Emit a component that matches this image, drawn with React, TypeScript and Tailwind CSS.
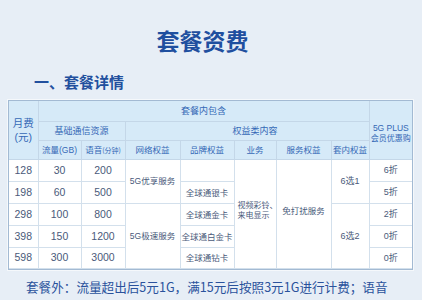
const cjk = { fontFamily: '"Noto Sans CJK SC", "Noto Sans", sans-serif' };
const tbl = { fontFamily: '"Liberation Sans", "Noto Sans CJK SC", sans-serif' };

const th = 'border border-[#c4d7e8] bg-[#d6eaf8] text-[#3468b6] p-0 font-normal text-center align-middle';
const td = 'border border-[#d3e0ec] bg-white text-[#4a5a7a] p-0 text-center align-middle';

const rows = [
  { fee: '128', data: '30', voice: '200', disc: '6折' },
  { fee: '198', data: '60', voice: '500', disc: '5折' },
  { fee: '298', data: '100', voice: '800', disc: '2折' },
  { fee: '398', data: '150', voice: '1200', disc: '0折' },
  { fee: '598', data: '300', voice: '3000', disc: '0折' },
];

const cards = ['', '全球通银卡', '全球通金卡', '全球通白金卡', '全球通钻卡'];
const heights = ['h-[22px]', 'h-[22px]', 'h-[22px]', 'h-[22px]', 'h-[21px]'];

export default function App() {
  return (
    <div className="w-[422px] h-[300px] overflow-hidden bg-[#e7eef6]" style={cjk}>
      <div className="pt-[29px] pr-[17px] flex justify-center">
        <h1 className="text-[23px] leading-none font-bold text-[#1f4f9f]">套餐资费</h1>
      </div>

      <h2 className="mt-[22px] pl-[34px] text-[15px] leading-none font-bold text-[#22509e]">一、套餐详情</h2>

      <div className="mt-[11px] ml-[8px] w-[405px] border border-[#a3bad3] shadow-[0_0_0_1px_rgba(255,255,255,0.6)]">
        <table className="w-[403px] table-fixed border-collapse text-[10px] leading-none" style={tbl}>
          <colgroup>
            <col className="w-[29px]" />
            <col className="w-[43px]" />
            <col className="w-[44px]" />
            <col className="w-[55px]" />
            <col className="w-[54px]" />
            <col className="w-[42px]" />
            <col className="w-[55px]" />
            <col className="w-[38px]" />
            <col className="w-[43px]" />
          </colgroup>
          <thead>
            <tr className="h-[20px]">
              <th rowSpan={3} className={`${th} border-t-0 border-l-0 text-[10.5px] leading-[14px]`}>
                月费
                <br />
                (元)
              </th>
              <th colSpan={7} className={`${th} border-t-0 text-[9px]`} style={cjk}>
                套餐内包含
              </th>
              <th rowSpan={3} className={`${th} border-t-0 border-r-0 text-[8.5px] leading-[10px] pt-[6px] whitespace-nowrap`}>
                5G PLUS
                <br />
                <span className="text-[8px]" style={cjk}>会员优惠购</span>
              </th>
            </tr>
            <tr className="h-[19px]">
              <th colSpan={2} className={`${th} text-[9px]`} style={cjk}>
                基础通信资源
              </th>
              <th colSpan={5} className={`${th} text-[9px]`} style={cjk}>
                <span className="pl-[16px]">权益类内容</span>
              </th>
            </tr>
            <tr className="h-[19px]">
              <th className={`${th} text-[8.5px]`}>
                <span style={cjk}>流量</span>(GB)
              </th>
              <th className={`${th} text-[8.5px]`} style={cjk}>
                语音<span className="text-[7px]">(分钟)</span>
              </th>
              <th className={`${th} text-[8.5px]`} style={cjk}>网络权益</th>
              <th className={`${th} text-[8.5px]`} style={cjk}>品牌权益</th>
              <th className={`${th} text-[8.5px]`} style={cjk}>业务</th>
              <th className={`${th} text-[8.5px]`} style={cjk}>服务权益</th>
              <th className={`${th} text-[8.5px]`} style={cjk}>套内权益</th>
            </tr>
          </thead>
          <tbody>
            {rows.map((r, i) => (
              <tr key={r.fee} className={heights[i]}>
                <td className={`${td} border-l-0 text-[10.5px]`}>{r.fee}</td>
                <td className={`${td} text-[10.5px]`}>{r.data}</td>
                <td className={`${td} text-[10.5px]`}>{r.voice}</td>
                {i === 0 && (
                  <td rowSpan={2} className={`${td} text-[8.5px]`}>
                    5G<span style={cjk}>优享服务</span>
                  </td>
                )}
                {i === 2 && (
                  <td rowSpan={3} className={`${td} text-[8.5px]`}>
                    5G<span style={cjk}>极速服务</span>
                  </td>
                )}
                <td className={`${td} text-[8.5px] whitespace-nowrap`} style={cjk}>
                  {cards[i]}
                </td>
                {i === 0 && (
                  <td rowSpan={5} className={`${td} text-[8px] leading-[10px] text-left pl-[3px] pb-[8px] whitespace-nowrap`} style={cjk}>
                    视频彩铃、
                    <br />
                    来电显示
                  </td>
                )}
                {i === 0 && (
                  <td rowSpan={5} className={`${td} text-[8.5px] pb-[6px]`} style={cjk}>
                    免打扰服务
                  </td>
                )}
                {i === 0 && (
                  <td rowSpan={2} className={`${td} text-[9px]`}>
                    6<span style={cjk}>选</span>1
                  </td>
                )}
                {i === 2 && (
                  <td rowSpan={3} className={`${td} text-[9px]`}>
                    6<span style={cjk}>选</span>2
                  </td>
                )}
                <td className={`${td} border-r-0 text-[9px]`}>
                  {r.disc.slice(0, 1)}
                  <span style={cjk}>折</span>
                </td>
              </tr>
            ))}
          </tbody>
        </table>
      </div>

      <p className="mt-[11px] pl-[26px] text-[12.6px] leading-none text-[#2a529c] whitespace-nowrap">
        套餐外：流量超出后5元1G，满15元后按照3元1G进行计费；语音
      </p>
    </div>
  );
}
